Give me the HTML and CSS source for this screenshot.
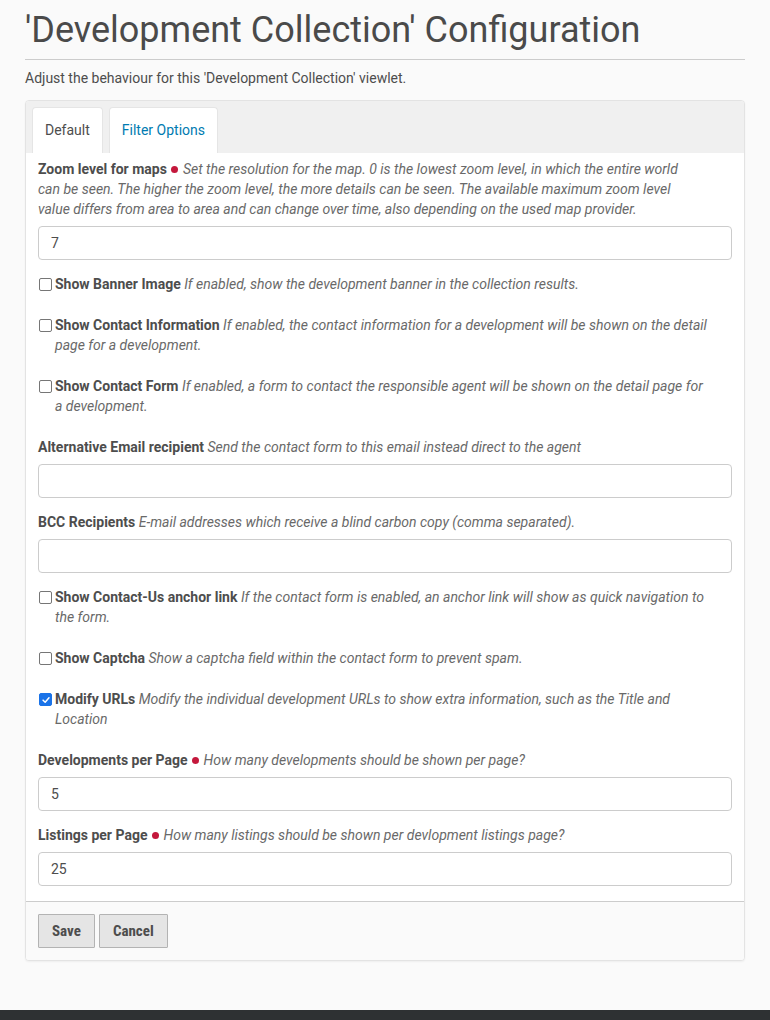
FILE: index.html
```html
<!DOCTYPE html>
<html>
<head>
<meta charset="utf-8">
<link rel="stylesheet" href="styles.css">
</head>
<body>
<main class="page">
  <h1 class="title">'Development Collection' Configuration</h1>
  <p class="lead">Adjust the behaviour for this 'Development Collection' viewlet.</p>
  <form class="card">
    <nav class="tabs">
      <span class="tab active">Default</span>
      <span class="tab link">Filter Options</span>
    </nav>
    <div class="body">
      <div class="field">
        <div class="label"><b>Zoom level for maps</b> <span class="req"></span> <i>Set the resolution for the map. 0 is the lowest zoom level, in which the entire world can be seen. The higher the zoom level, the more details can be seen. The available maximum zoom level value differs from area to area and can change over time, also depending on the used map provider.</i></div>
        <div class="input">7</div>
      </div>
      <div class="check">
        <span class="box"></span>
        <div class="label"><b>Show Banner Image</b> <i>If enabled, show the development banner in the collection results.</i></div>
      </div>
      <div class="check">
        <span class="box"></span>
        <div class="label"><b>Show Contact Information</b> <i>If enabled, the contact information for a development will be shown on the detail page for a development.</i></div>
      </div>
      <div class="check">
        <span class="box"></span>
        <div class="label"><b>Show Contact Form</b> <i>If enabled, a form to contact the responsible agent will be shown on the detail page for a development.</i></div>
      </div>
      <div class="field">
        <div class="label"><b>Alternative Email recipient</b> <i>Send the contact form to this email instead direct to the agent</i></div>
        <div class="input"></div>
      </div>
      <div class="field">
        <div class="label"><b>BCC Recipients</b> <i>E-mail addresses which receive a blind carbon copy (comma separated).</i></div>
        <div class="input"></div>
      </div>
      <div class="check">
        <span class="box"></span>
        <div class="label"><b>Show Contact-Us anchor link</b> <i>If the contact form is enabled, an anchor link will show as quick navigation to the form.</i></div>
      </div>
      <div class="check">
        <span class="box"></span>
        <div class="label"><b>Show Captcha</b> <i>Show a captcha field within the contact form to prevent spam.</i></div>
      </div>
      <div class="check">
        <span class="box on"><svg viewBox="0 0 12 12" width="10" height="10"><path d="M2.5 6.2 L5 8.6 L9.6 3.4" fill="none" stroke="#fff" stroke-width="1.8" stroke-linecap="round" stroke-linejoin="round"/></svg></span>
        <div class="label"><b>Modify URLs</b> <i>Modify the individual development URLs to show extra information, such as the Title and Location</i></div>
      </div>
      <div class="field">
        <div class="label"><b>Developments per Page</b> <span class="req"></span> <i>How many developments should be shown per page?</i></div>
        <div class="input">5</div>
      </div>
      <div class="field last">
        <div class="label"><b>Listings per Page</b> <span class="req"></span> <i>How many listings should be shown per devlopment listings page?</i></div>
        <div class="input">25</div>
      </div>
    </div>
    <div class="footer">
      <span class="btn">Save</span>
      <span class="btn">Cancel</span>
    </div>
  </form>
</main>
<div class="bottombar"></div>
</body>
</html>
```

FILE: styles.css
```css
html, body {
  margin: 0;
  padding: 0;
  background: #fafafa;
}
body {
  font-family: Roboto, "Noto Sans", sans-serif;
  font-size: 14px;
  line-height: 20px;
  color: #4d4d4d;
  width: 770px;
  height: 1020px;
  position: relative;
  overflow: hidden;
}
.page {
  padding: 0 25px;
}
.title {
  margin: 0;
  padding-top: 11px;
  padding-bottom: 9px;
  font-family: Roboto, sans-serif;
  font-weight: 400;
  font-size: 36px;
  line-height: 39px;
  color: #4a4a4a;
  border-bottom: 1px solid #cccccc;
}
.lead {
  margin: 0;
  padding: 8px 0 12px;
  font-family: Roboto, sans-serif;
  font-size: 14px;
  line-height: 20px;
  color: #4d4d4d;
}
.card {
  margin: 0;
  border: 1px solid #e3e3e3;
  border-radius: 4px;
  background: #fff;
  box-shadow: 0 1px 2px rgba(0,0,0,0.05);
  overflow: hidden;
}
.tabs {
  display: flex;
  gap: 6px;
  background: #f0f0f0;
  padding: 6px 6px 0;
  height: 46px;
  align-items: flex-end;
}
.tab {
  display: block;
  height: 45px;
  line-height: 44px;
  padding: 0 12px;
  background: #fff;
  border: 1px solid #e5e5e5;
  border-bottom: 0;
  border-radius: 4px 4px 0 0;
  font-size: 14px;
  color: #4d4d4d;
}
.tab.link {
  color: #007bb1;
}
.body {
  padding: 6px 12px 15px;
}
.label b {
  font-weight: 700;
  color: #4d4d4d;
}
.label i {
  color: #696969;
}
.field .label {
  max-width: 665px;
}
.check .label {
  max-width: 658px;
}
.req {
  display: inline-block;
  width: 7px;
  height: 7px;
  border-radius: 50%;
  background: #c4183c;
  vertical-align: 1px;
  margin: 0 1px;
}
.field {
  margin-bottom: 14px;
}
.field .input {
  margin-top: 7px;
  height: 32px;
  line-height: 32px;
  border: 1px solid #cccccc;
  border-radius: 4px;
  padding: 0 12px;
  color: #4d4d4d;
}
.field.last {
  margin-bottom: 0;
}
.check {
  display: flex;
  align-items: flex-start;
  gap: 3px;
  margin-bottom: 21px;
  padding-left: 1px;
}
.box {
  flex: none;
  width: 11px;
  height: 11px;
  margin-top: 4px;
  border: 1px solid #767676;
  border-radius: 2px;
  background: #fff;
  display: flex;
  align-items: center;
  justify-content: center;
}
.box.on {
  background: #1a73e8;
  border-color: #1a73e8;
}
.footer {
  border-top: 1px solid #cccccc;
  background: #fafafa;
  padding: 12px 12px 12px;
  display: flex;
  gap: 4px;
}
.btn {
  display: block;
  height: 32px;
  line-height: 32px;
  padding: 0 13px;
  background: #e5e5e5;
  border: 1px solid #b3b3b3;
  border-radius: 1px;
  font-stretch: 85%;
  font-weight: 700;
  font-size: 15px;
  color: #4d4d4d;
}
.bottombar {
  position: absolute;
  left: 0;
  right: 0;
  top: 1010px;
  height: 10px;
  background: #2e3133;
}
```
